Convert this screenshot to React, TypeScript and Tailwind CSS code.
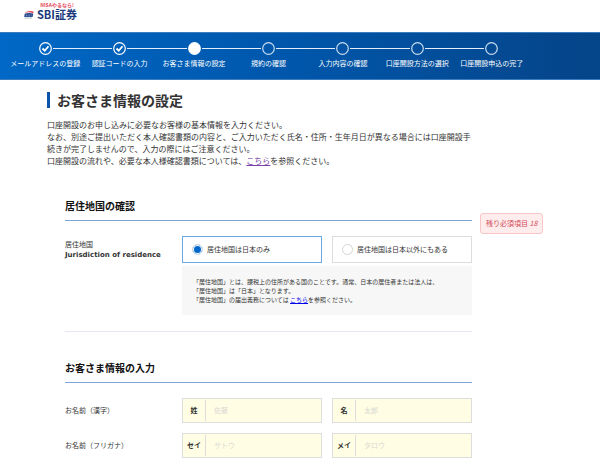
import React, { useState } from 'react';
import clsx from 'clsx';

const steps = [
  'メールアドレスの登録',
  '認証コードの入力',
  'お客さま情報の設定',
  '規約の確認',
  '入力内容の確認',
  '口座開設方法の選択',
  '口座開設申込の完了',
];

const CURRENT_STEP = 2;

const residences = [
  { value: 'japan', label: '居住地国は日本のみ' },
  { value: 'other', label: '居住地国は日本以外にもある' },
];

const nameRows = [
  {
    title: 'お名前（漢字）',
    fields: [
      { id: 'last-name', label: '姓', placeholder: '佐藤' },
      { id: 'first-name', label: '名', placeholder: '太郎' },
    ],
  },
  {
    title: 'お名前（フリガナ）',
    fields: [
      { id: 'last-kana', label: 'セイ', placeholder: 'サトウ' },
      { id: 'first-kana', label: 'メイ', placeholder: 'タロウ' },
    ],
  },
];

const Logo: React.FC = () => (
  <a href="#" className="flex items-end gap-[3px] text-[#1b3a7c]">
    <svg viewBox="0 0 20 18" className="mb-0.5 h-[9px] w-[10px]" aria-hidden="true">
      <path d="M1 6.5C6 1.5 14 0.5 19.5 3.5L18 7C13 4 7 4 1 6.5Z" fill="#e0434f" />
      <path d="M1.5 7.5C7 5.5 13 5.5 18.5 7.5L17 14H0.5Z" fill="#1f4288" />
      <path d="M4 10H7M9 10H12M14 10H15.5M3.5 12H6.5M8.5 12H11.5M13.5 12H15" stroke="#fff" strokeWidth="0.8" />
      <path d="M1 16H16" stroke="#9aa5bd" strokeWidth="1.4" />
    </svg>
    <span className="flex flex-col">
      <span className="text-center text-[5px] leading-[6px] font-bold text-[#e5485a]">NISAやるなら!</span>
      <span className="text-[11px] leading-[13px] font-bold">SBI証券</span>
    </span>
  </a>
);

const StepCircle: React.FC<{ index: number }> = ({ index }) => (
  <svg viewBox="0 0 26 26" className="size-[13px] shrink-0" aria-hidden="true">
    <circle
      cx="13"
      cy="13"
      r="11.6"
      fill={index === CURRENT_STEP ? '#fff' : 'none'}
      stroke={index > CURRENT_STEP ? '#c9dcf0' : '#fff'}
      strokeWidth="2.4"
    />
    {index < CURRENT_STEP && (
      <path d="M7 13L11.5 17.5L19 8.5" fill="none" stroke="#fff" strokeWidth="3.6" />
    )}
  </svg>
);

const StepBar: React.FC = () => (
  <nav className="h-12 border-y border-[#3c7dc0] bg-linear-to-r from-[#0068c6] via-[#0056aa] to-[#054488] pt-[9px]">
    <ol className="ml-2 grid max-w-[521px] grid-cols-7">
      {steps.map((step, i) => (
        <li key={step} className="flex flex-col items-center">
          <div className="flex w-full items-center gap-px">
            <span className={clsx('h-px flex-1', i > 0 && 'bg-[#e3eefa]')} />
            <StepCircle index={i} />
            <span className={clsx('h-px flex-1', i < steps.length - 1 && 'bg-[#e3eefa]')} />
          </div>
          <span className="mt-[3px] text-[7px] leading-[10px] whitespace-nowrap text-white">{step}</span>
        </li>
      ))}
    </ol>
  </nav>
);

const SectionTitle: React.FC<{ children: React.ReactNode }> = ({ children }) => (
  <h2 className="border-b border-[#7fa4d6] pb-[7px] text-[10px] leading-[14px] font-bold text-[#111]">{children}</h2>
);

export default function App() {
  const [residence, setResidence] = useState('japan');
  const [names, setNames] = useState<Record<string, string>>({});

  return (
    <div className="min-h-screen bg-white font-['Noto_Sans_CJK_JP',sans-serif] text-[#333]">
      <header className="flex h-8 items-start pt-0.5 pl-6">
        <Logo />
      </header>
      <StepBar />

      <main className="px-[47px] pt-3">
        <h1 className="border-l-[3px] border-[#0a55ab] pl-[7px] text-[14px] leading-[16px] font-bold">
          お客さま情報の設定
        </h1>
        <p className="mt-[11px] max-w-[430px] text-[8px] leading-[12px]">
          口座開設のお申し込みに必要なお客様の基本情報を入力ください。
          <br />
          なお、別途ご提出いただく本人確認書類の内容と、ご入力いただく氏名・住所・生年月日が異なる場合には口座開設手続きが完了しませんので、入力の際にはご注意ください。
          <br />
          口座開設の流れや、必要な本人様確認書類については、
          <a href="#" className="text-[#7a3fa8] underline">こちら</a>
          を参照ください。
        </p>

        <form className="relative mt-8 ml-[18px] max-w-[407px]">
          <section>
            <SectionTitle>居住地国の確認</SectionTitle>
            <div className="mt-[15px] flex" role="radiogroup" aria-labelledby="residence-title">
              <div
                id="residence-title"
                className="w-[117px] shrink-0 pt-[3px] text-[7px] leading-[11px]"
              >
                <p>居住地国</p>
                <p className="font-['DejaVu_Sans',sans-serif] font-bold">Jurisdiction of residence</p>
              </div>
              <div className="flex-1">
                <div className="grid grid-cols-2 gap-[10px]">
                  {residences.map((item) => (
                    <label
                      key={item.value}
                      className={clsx(
                        'flex h-[27px] items-center gap-1 border pl-[9px] text-[7px]',
                        residence === item.value ? 'border-[#6aaae4]' : 'border-[#ddd]'
                      )}
                    >
                      <input
                        type="radio"
                        name="residence"
                        value={item.value}
                        checked={residence === item.value}
                        onChange={() => setResidence(item.value)}
                        className="size-[11px] appearance-none rounded-full border border-[#d5d5d5] bg-white checked:border-[#dbe3ea] checked:bg-[#0068cc] checked:shadow-[inset_0_0_0_1px_#fff]"
                      />
                      {item.label}
                    </label>
                  ))}
                </div>
                <p className="mt-[3px] bg-[#f7f7f7] px-[11px] py-[11px] text-[6px] leading-[9px]">
                  「居住地国」とは、課税上の住所がある国のことです。通常、日本の居住者または法人は、
                  <br />
                  「居住地国」は「日本」となります。
                  <br />
                  「居住地国」の届出義務については{' '}
                  <a href="#" className="text-[#0000ee] underline">こちら</a>
                  を参照ください。
                </p>
              </div>
            </div>
            <hr className="mt-4 border-[#e4e7f0]" />
          </section>

          <section className="mt-[29px]">
            <SectionTitle>お客さま情報の入力</SectionTitle>
            <div className="mt-[15px] flex flex-col gap-[10px]">
              {nameRows.map((row) => (
                <div key={row.title} className="flex items-center">
                  <p className="w-[117px] shrink-0 text-[7px]">{row.title}</p>
                  <div className="grid flex-1 grid-cols-2 gap-[10px]">
                    {row.fields.map((field) => (
                      <div key={field.id} className="flex h-[25px] border border-[#ddd] bg-[#fffde3] py-px text-[7px]">
                        <label
                          htmlFor={field.id}
                          className="flex w-[23px] shrink-0 items-center justify-center border-r border-[#ddd] font-bold"
                        >
                          {field.label}
                        </label>
                        <input
                          id={field.id}
                          type="text"
                          placeholder={field.placeholder}
                          value={names[field.id] ?? ''}
                          onChange={(e) => setNames({ ...names, [field.id]: e.target.value })}
                          className="min-w-0 flex-1 bg-transparent pl-2 outline-none placeholder:text-[#d8d8d4]"
                        />
                      </div>
                    ))}
                  </div>
                </div>
              ))}
            </div>
          </section>

          {/* Remaining required items */}
          <div className="absolute top-[14px] left-full ml-2 rounded-[3px] border border-[#f8c6c8] bg-[#ffecec] px-[5px] py-1 text-[7px] leading-[11px] whitespace-nowrap text-[#cf4a58]">
            残り必須項目 <em>18</em>
          </div>
        </form>
      </main>
    </div>
  );
}
